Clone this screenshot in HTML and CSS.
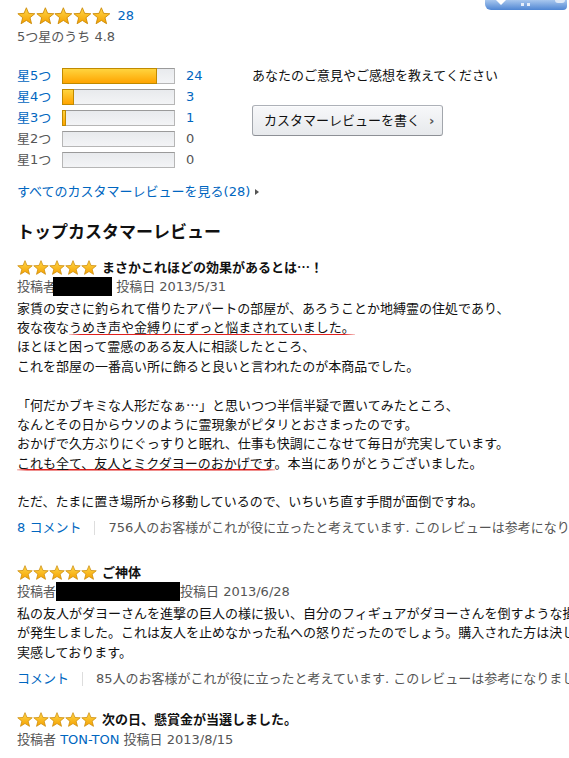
FILE: index.html
```html
<!DOCTYPE html>
<html lang="ja">
<head>
<meta charset="utf-8">
<title>カスタマーレビュー</title>
<link rel="stylesheet" href="styles.css">
</head>
<body>
<svg class="defs" width="0" height="0" aria-hidden="true">
  <defs>
    <linearGradient id="gold" x1="0" y1="0" x2="0" y2="1">
      <stop offset="0" stop-color="#ffd84a"/>
      <stop offset="1" stop-color="#f4a000"/>
    </linearGradient>
    <symbol id="star" viewBox="0 0 20 19">
      <polygon points="10,0.8 12.5,6.9 19.2,7.3 14,11.6 15.7,18.2 10,14.6 4.3,18.2 6,11.6 0.8,7.3 7.5,6.9" fill="url(#gold)" stroke="#c98600" stroke-width="0.9" stroke-linejoin="round"/>
    </symbol>
  </defs>
</svg>

<div class="popover-edge"><i></i><i></i></div>

<main class="page">
  <section class="summary">
    <div class="overall">
      <span class="stars stars-lg">
        <svg><use href="#star"/></svg><svg><use href="#star"/></svg><svg><use href="#star"/></svg><svg><use href="#star"/></svg><svg><use href="#star"/></svg>
      </span>
      <a class="link total">28</a>
    </div>
    <div class="avg">5つ星のうち 4.8</div>
  </section>

  <section class="ratings">
    <div class="histo">
      <a class="link">星5つ</a><div class="bar"><div class="fill" style="width:85.7%"></div></div><a class="link num">24</a>
      <a class="link">星4つ</a><div class="bar"><div class="fill" style="width:10.7%"></div></div><a class="link num">3</a>
      <a class="link">星3つ</a><div class="bar"><div class="fill" style="width:3.6%"></div></div><a class="link num">1</a>
      <span class="muted">星2つ</span><div class="bar"></div><span class="muted num">0</span>
      <span class="muted">星1つ</span><div class="bar"></div><span class="muted num">0</span>
    </div>
    <div class="feedback">
      <div class="prompt">あなたのご意見やご感想を教えてください</div>
      <a class="btn">カスタマーレビューを書く<span class="chev">›</span></a>
    </div>
  </section>

  <div class="all-link"><a class="link">すべてのカスタマーレビューを見る(28)</a><span class="caret"></span></div>

  <h2 class="heading">トップカスタマーレビュー</h2>

  <article class="review">
    <div class="review-title">
      <span class="stars stars-sm"><svg><use href="#star"/></svg><svg><use href="#star"/></svg><svg><use href="#star"/></svg><svg><use href="#star"/></svg><svg><use href="#star"/></svg></span>
      <span class="title">まさかこれほどの効果があるとは<span class="cjk">…</span>！</span>
    </div>
    <div class="byline">投稿者<span class="redact r1"></span> 投稿日 2013/5/31</div>
    <div class="body">
      家賃の安さに釣られて借りたアパートの部屋が、あろうことか地縛霊の住処であり、<br>
      夜な夜な<span class="mark">うめき声や金縛りにずっと悩まされていました。</span><br>
      ほとほと困って霊感のある友人に相談したところ、<br>
      これを部屋の一番高い所に飾ると良いと言われたのが本商品でした。<br>
      <br>
      「何だかブキミな人形だなぁ<span class="cjk">…</span>」と思いつつ半信半疑で置いてみたところ、<br>
      なんとその日からウソのように霊現象がピタリとおさまったのです。<br>
      おかげで久方ぶりにぐっすりと眠れ、仕事も快調にこなせて毎日が充実しています。<br>
      <span class="mark">これも全て、友人とミクダヨーのおかげです</span>。本当にありがとうございました。<br>
      <br>
      ただ、たまに置き場所から移動しているので、いちいち直す手間が面倒ですね。
    </div>
    <div class="foot"><a class="link">8 コメント</a><span class="sep"></span><span>756人のお客様がこれが役に立ったと考えています. このレビューは参考になりましたか？</span></div>
  </article>

  <article class="review">
    <div class="review-title">
      <span class="stars stars-sm"><svg><use href="#star"/></svg><svg><use href="#star"/></svg><svg><use href="#star"/></svg><svg><use href="#star"/></svg><svg><use href="#star"/></svg></span>
      <span class="title">ご神体</span>
    </div>
    <div class="byline">投稿者<span class="redact r2"></span>投稿日 2013/6/28</div>
    <div class="body">
      私の友人がダヨーさんを進撃の巨人の様に扱い、自分のフィギュアがダヨーさんを倒すような撮影をした翌日、友人宅で原因不明のボヤ騒ぎ<br>
      が発生しました。これは友人を止めなかった私への怒りだったのでしょう。購入された方は決して粗末に扱わないでください。身をもって<br>
      実感しております。
    </div>
    <div class="foot"><a class="link">コメント</a><span class="sep"></span><span>85人のお客様がこれが役に立ったと考えています. このレビューは参考になりましたか？</span></div>
  </article>

  <article class="review last">
    <div class="review-title">
      <span class="stars stars-sm"><svg><use href="#star"/></svg><svg><use href="#star"/></svg><svg><use href="#star"/></svg><svg><use href="#star"/></svg><svg><use href="#star"/></svg></span>
      <span class="title">次の日、懸賞金が当選しました。</span>
    </div>
    <div class="byline">投稿者 <a class="link">TON-TON</a> 投稿日 2013/8/15</div>
  </article>
</main>
</body>
</html>
```

FILE: styles.css
```css
html, body {
  margin: 0;
  padding: 0;
  background: #fff;
  overflow: hidden;
}

body {
  font-family: "DejaVu Sans", "Noto Sans CJK JP", sans-serif;
  font-size: 13px;
  line-height: 19px;
  color: #111;
}

.cjk {
  font-family: "Noto Sans CJK JP", sans-serif;
}

.defs {
  position: absolute;
  width: 0;
  height: 0;
}

.link {
  color: #0066c0;
  text-decoration: none;
}

.muted {
  color: #555;
}

/* cropped blue popover edge at top right */
.popover-edge {
  position: absolute;
  top: 0;
  left: 485px;
  width: 82px;
  height: 10px;
  background: linear-gradient(#a8c7ee, #4f86d3);
  border-radius: 0 0 4px 6px;
  z-index: 2;
}
.popover-edge::before {
  content: "";
  position: absolute;
  left: 11px;
  top: 0;
  border-left: 5px solid transparent;
  border-right: 5px solid transparent;
  border-top: 5px solid #fff;
}
.popover-edge::after {
  content: "";
  position: absolute;
  right: 2px;
  top: 0;
  width: 10px;
  height: 3px;
  border-radius: 0 0 4px 4px;
  background: #dfe9f7;
}
.popover-edge i {
  position: absolute;
  top: 3px;
  width: 3px;
  height: 3px;
  background: #e6eefa;
}
.popover-edge i:first-child { left: 36px; }
.popover-edge i:last-child { left: 42px; }

.page {
  padding: 7px 0 0 17px;
}

/* summary */
.overall {
  display: flex;
  align-items: center;
  height: 18px;
}
.stars {
  display: inline-flex;
  flex: none;
}
.stars svg {
  display: block;
}
.stars-lg svg {
  width: 18.7px;
  height: 17.5px;
}
.stars-sm svg {
  width: 16px;
  height: 15px;
}
.total {
  margin-left: 7px;
  line-height: 18px;
}
.avg {
  margin-top: 2px;
  line-height: 20px;
  color: #555;
}

/* histogram */
.ratings {
  display: flex;
  margin-top: 18px;
}
.histo {
  width: 235px;
  flex: none;
  display: grid;
  grid-template-columns: 45px 113px auto;
  grid-auto-rows: 21px;
  align-items: center;
}
.num {
  padding-left: 11px;
}
.bar {
  height: 16px;
  box-sizing: border-box;
  border: 1px solid #b6b6b6;
  border-top-color: #9a9a9a;
  background: linear-gradient(#e8eaed, #f3f4f6);
}
.fill {
  height: 16px;
  margin: -1px 0 0 -1px;
  box-sizing: border-box;
  border: 1px solid #c08a00;
  background: linear-gradient(#ffd43e, #ffa400);
}

.feedback .prompt {
  line-height: 21px;
}
.btn {
  margin-top: 19px;
  display: flex;
  align-items: center;
  width: 191px;
  height: 31px;
  box-sizing: border-box;
  padding-left: 11px;
  border: 1px solid;
  border-color: #adb1b8 #a2a6ac #8d9096;
  border-radius: 3px;
  background: linear-gradient(#f7f8fa, #e7e9ec);
  box-shadow: inset 0 1px 0 rgba(255, 255, 255, 0.6);
  color: #111;
}
.btn .chev {
  margin-left: 9px;
  font-weight: bold;
  color: #555;
}

.all-link {
  margin-top: 12px;
  line-height: 20px;
}
.caret {
  display: inline-block;
  margin-left: 5px;
  vertical-align: 1px;
  border-left: 4px solid #555;
  border-top: 3.5px solid transparent;
  border-bottom: 3.5px solid transparent;
}

.heading {
  margin: 18px 0 0;
  font-size: 17px;
  line-height: 24px;
  font-weight: bold;
}

/* reviews */
.review {
  margin-top: 13px;
}
.review + .review {
  margin-top: 24px;
}
.review.last {
  margin-top: 21px;
}
.review-title {
  display: flex;
  align-items: center;
  height: 20px;
}
.title {
  margin-left: 5px;
  font-weight: bold;
}
.byline {
  line-height: 20px;
  color: #555;
  white-space: nowrap;
}
.redact {
  display: inline-block;
  height: 19px;
  vertical-align: top;
  background: #000;
}
.r1 { width: 59px; margin-left: -3px; }
.r2 { width: 124px; }

.body {
  margin-top: 2px;
  line-height: 19.2px;
  white-space: nowrap;
}
.mark {
  background: linear-gradient(to right, rgba(224, 32, 30, 0.25), #e0201e 4%, #e0201e 96%, rgba(224, 32, 30, 0.25)) left bottom / 100% 1.5px no-repeat;
}

.foot {
  margin-top: 7px;
  display: flex;
  align-items: center;
  line-height: 20px;
  color: #555;
  white-space: nowrap;
}
.sep {
  flex: none;
  width: 1px;
  height: 14px;
  margin: 0 13px;
  background: #ddd;
}
```
